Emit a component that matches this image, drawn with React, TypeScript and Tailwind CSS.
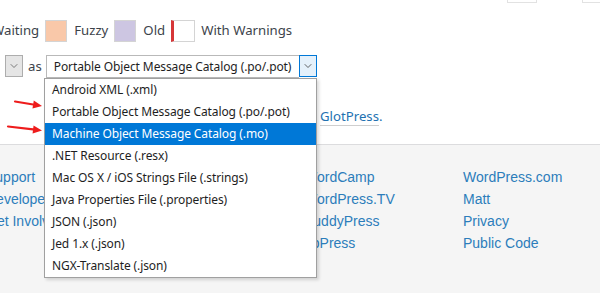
import { ChevronDown } from 'lucide-react';

const formats = [
  'Android XML (.xml)',
  'Portable Object Message Catalog (.po/.pot)',
  'Machine Object Message Catalog (.mo)',
  '.NET Resource (.resx)',
  'Mac OS X / iOS Strings File (.strings)',
  'Java Properties File (.properties)',
  'JSON (.json)',
  'Jed 1.x (.json)',
  'NGX-Translate (.json)',
];

// second column sits fully under the open dropdown
const footerCols = [
  ['Support', 'Developers', 'Get Involved'],
  [],
  ['WordCamp', 'WordPress.TV', 'BuddyPress', 'bbPress'],
  ['WordPress.com', 'Matt', 'Privacy', 'Public Code'],
];

const ui = "font-['Noto_Sans','Open_Sans',sans-serif]";

function Swatch({ color, label }: { color: string; label: string }) {
  return (
    <div className="flex items-center gap-[7px]">
      <span className={`w-[22px] h-[22px] border border-[#d4d4d4] ${color}`} />
      <span>{label}</span>
    </div>
  );
}

function Arrow({ x1, y1, x2, y2 }: { x1: number; y1: number; x2: number; y2: number }) {
  const a = Math.atan2(y2 - y1, x2 - x1);
  const len = 9;
  const w = 4;
  const bx = x2 - len * Math.cos(a);
  const by = y2 - len * Math.sin(a);
  const px = -Math.sin(a) * w;
  const py = Math.cos(a) * w;
  return (
    <g>
      <line x1={x1} y1={y1} x2={bx} y2={by} stroke="#ee1c1c" strokeWidth={2.2} strokeLinecap="round" />
      <polygon points={`${x2},${y2} ${bx + px},${by + py} ${bx - px},${by - py}`} fill="#ee1c1c" />
    </g>
  );
}

export default function App() {
  return (
    <div className={`relative w-[600px] h-[293px] overflow-hidden bg-white ${ui}`}>
      {/* leftover boxes at top edge */}
      <div className="flex h-[3px]">
        <div className="ml-[507px] w-[30px] border-x border-b border-[#e2e2e2]" />
        <div className="ml-[45px] flex-1 border-l border-b border-[#e2e2e2]" />
      </div>

      {/* legend */}
      <div className="mt-[17px] ml-[-8px] flex items-center gap-[6px] text-[13.2px] text-[#3c434a] h-[22px]">
        <span>Waiting</span>
        <Swatch color="bg-[#f9c8a9]" label="Fuzzy" />
        <Swatch color="bg-[#cdc6e2]" label="Old" />
        <div className="flex items-center gap-[6px]">
          <span className="w-[24px] h-[22px] border border-[#d4d4d4] border-l-[3px] border-l-[#d63638] bg-white" />
          <span>With Warnings</span>
        </div>
      </div>

      {/* export row */}
      <div className="mt-[13px] flex items-start h-[22px] text-[#1e1e1e]">
        <div className="ml-[5px] w-[18px] h-[22px] bg-[#e5e5e5] border border-[#adadad] flex items-center justify-center">
          <ChevronDown className="w-3 h-3 text-[#555]" strokeWidth={1.5} />
        </div>
        <span className="ml-[5px] text-[13.2px] leading-[22px] text-[#3c434a]">as</span>
        <div className="ml-[4px] w-[253px] h-[23px] border border-[#b9b9b9] border-r-0 flex items-center pl-[7px] text-[12px] tracking-[-0.1px] whitespace-nowrap">
          Portable Object Message Catalog (.po/.pot)
        </div>
        <div className="w-[18px] h-[22px] bg-[#e5f1fb] border border-[#0078d7] flex items-center justify-center">
          <ChevronDown className="w-3 h-3 text-[#333]" strokeWidth={1.5} />
        </div>
      </div>

      {/* link line */}
      <div className="mt-[28px] ml-[320px] text-[13.2px] h-[22px] leading-[22px]">
        <span className="text-[#2271b1] border-b border-[#cfcfcf]">GlotPress</span>
        <span className="text-[#2271b1]">.</span>
      </div>

      {/* footer */}
      <div className="mt-[17px] h-[200px] border-t border-[#dcdcde] bg-[#f5f5f5] pt-[21px]">
        <div className="ml-[-14px] flex font-['Liberation_Sans',Arial,sans-serif] text-[14px] leading-[22px]">
          {footerCols.map((col, i) => (
            <ul key={i} className="w-[159px] shrink-0">
              {col.map((item) => (
                <li key={item} className="text-[#2c7dbb]">{item}</li>
              ))}
            </ul>
          ))}
        </div>
      </div>

      {/* open select dropdown */}
      <ul className="absolute left-[44px] top-[78px] w-[273px] border border-[#a0a0a0] bg-white text-[12px] tracking-[-0.1px] text-[#1e1e1e] shadow-[2px_2px_3px_rgba(0,0,0,0.15)]">
        {formats.map((f, i) => (
          <li
            key={f}
            className={`h-[22px] leading-[22px] pl-[7px] whitespace-nowrap ${i === 2 ? 'bg-[#0078d7] text-white' : ''}`}
          >
            {f}
          </li>
        ))}
      </ul>

      {/* annotation arrows */}
      <svg className="absolute left-0 top-0 pointer-events-none" width={600} height={293}>
        <Arrow x1={15} y1={101.5} x2={42} y2={106} />
        <Arrow x1={8} y1={126.5} x2={42} y2={130.5} />
      </svg>
    </div>
  );
}
